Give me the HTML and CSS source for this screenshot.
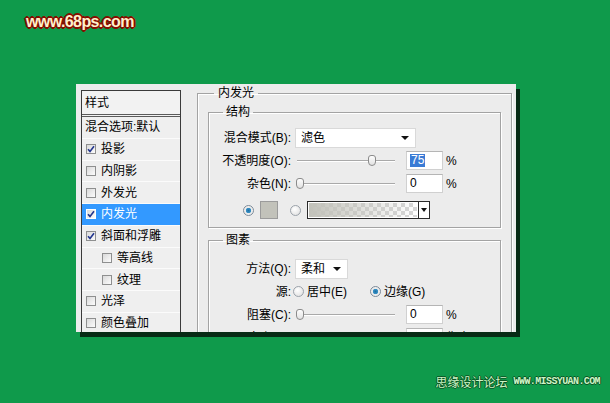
FILE: index.html
```html
<!DOCTYPE html>
<html lang="zh-CN">
<head>
  <meta charset="UTF-8">
  <meta name="viewport" content="width=device-width, initial-scale=1.0">
  <title>图层样式 - 内发光</title>
  <link rel="stylesheet" href="styles.css">
</head>
<body>
  <div class="logo">www.68ps.com</div>

  <div class="dialog">
    <div class="style-list">
      <div class="list-head">样式</div>
      <div class="list-item">混合选项:默认</div>
      <div class="list-item"><span class="check on"><svg viewBox="0 0 8 8"><path d="M1 4.2l2 2.2L7 1.2"/></svg></span>投影</div>
      <div class="list-item"><span class="check"></span>内阴影</div>
      <div class="list-item"><span class="check"></span>外发光</div>
      <div class="list-item selected"><span class="check on"><svg viewBox="0 0 8 8"><path d="M1 4.2l2 2.2L7 1.2"/></svg></span>内发光</div>
      <div class="list-item"><span class="check on"><svg viewBox="0 0 8 8"><path d="M1 4.2l2 2.2L7 1.2"/></svg></span>斜面和浮雕</div>
      <div class="list-item sub"><span class="check"></span>等高线</div>
      <div class="list-item sub"><span class="check"></span>纹理</div>
      <div class="list-item"><span class="check"></span>光泽</div>
      <div class="list-item"><span class="check"></span>颜色叠加</div>
    </div>

    <div class="settings">
      <fieldset class="group outer">
        <legend>内发光</legend>

        <fieldset class="group">
          <legend>结构</legend>
          <div class="row">
            <span class="label">混合模式(B):</span>
            <div class="select mode"><span>滤色</span><i class="arrow"></i></div>
          </div>
          <div class="row">
            <span class="label">不透明度(O):</span>
            <div class="slider"><i class="thumb" style="left: 73%"></i></div>
            <div class="field"><span class="picked">75</span></div>
            <span class="unit">%</span>
          </div>
          <div class="row">
            <span class="label">杂色(N):</span>
            <div class="slider"><i class="thumb" style="left: 0%"></i></div>
            <div class="field">0</div>
            <span class="unit">%</span>
          </div>
          <div class="row fill-row">
            <span class="radio on"></span>
            <span class="swatch"></span>
            <span class="radio"></span>
            <div class="gradient"><span class="gradient-bar"></span><i class="gradient-drop"><i class="arrow"></i></i></div>
          </div>
        </fieldset>

        <fieldset class="group">
          <legend>图素</legend>
          <div class="row">
            <span class="label">方法(Q):</span>
            <div class="select method"><span>柔和</span><i class="arrow"></i></div>
          </div>
          <div class="row">
            <span class="label">源:</span>
            <span class="radio"></span>
            <span class="option">居中(E)</span>
            <span class="radio on second"></span>
            <span class="option">边缘(G)</span>
          </div>
          <div class="row">
            <span class="label">阻塞(C):</span>
            <div class="slider"><i class="thumb" style="left: 0%"></i></div>
            <div class="field">0</div>
            <span class="unit">%</span>
          </div>
          <div class="row">
            <span class="label">大小(S):</span>
            <div class="slider"><i class="thumb" style="left: 16%"></i></div>
            <div class="field">10</div>
            <span class="unit">像素</span>
          </div>
        </fieldset>
      </fieldset>
    </div>
  </div>

  <div class="watermark">
    <span class="wm-cn">思缘设计论坛</span>
    <span class="wm-en">WWW.MISSYUAN.COM</span>
  </div>
</body>
</html>
```

FILE: styles.css
```css
:root {
  --green: #0f9a4b;
  --panel: #ececec;
  --line: #a3a3a3;
  --text: #000;
  --select-blue: #3399ff;
}

* {
  margin: 0;
  padding: 0;
  box-sizing: border-box;
}

body {
  width: 610px;
  height: 403px;
  overflow: hidden;
  background: var(--green);
  font-family: 'Liberation Sans', 'Noto Sans CJK SC', sans-serif;
  font-size: 12px;
  color: var(--text);
}

.logo {
  padding: 13px 0 0 26px;
  height: 31px;
  font-family: 'Liberation Sans', sans-serif;
  font-weight: 700;
  font-size: 16px;
  line-height: 18px;
  letter-spacing: -0.6px;
  color: #fff0cc;
  text-shadow:
    1px 0 #860d00, -1px 0 #860d00, 0 1px #860d00, 0 -1px #860d00,
    1px 1px #860d00, -1px -1px #860d00, 1px -1px #860d00, -1px 1px #860d00,
    2px 0 #860d00, -2px 0 #860d00, 0 2px #860d00, 0 -2px #860d00;
}

/* dialog */

.dialog {
  display: flex;
  align-items: flex-start;
  width: 440px;
  height: 248px;
  margin: 53px 0 0 76px;
  padding: 2px 0 0 5px;
  background: var(--panel);
  box-shadow: 4px 5px 0 #072b15;
  overflow: hidden;
}

.style-list {
  width: 100px;
  margin-top: 4px;
  height: 260px;
  border: 1px solid #3a3a3a;
  border-bottom: none;
  background: #efefef;
}

.list-head {
  height: 26px;
  padding: 4px 0 0 3px;
  line-height: 16px;
  background: #f2f2f2;
  border-bottom: 3px double #5a5a5a;
}

.list-item {
  display: flex;
  align-items: center;
  height: 21.75px;
  padding-left: 3px;
  line-height: 16px;
  border-bottom: 1px solid #fbfbfb;
  white-space: nowrap;
}

.list-item .check {
  margin-left: 1px;
}

.list-item.sub {
  padding-left: 19px;
}

.list-item.selected {
  background: var(--select-blue);
  color: #fff;
}

.check {
  display: inline-flex;
  width: 10px;
  height: 10px;
  margin-right: 5px;
  border: 1px solid #8e8f8f;
  background: linear-gradient(135deg, #d9d9d9, #fcfcfc);
}

.check svg {
  width: 8px;
  height: 8px;
}

.check path {
  fill: none;
  stroke: #23368e;
  stroke-width: 1.6;
}

.selected .check {
  border-color: #fff;
}

/* right side */

.settings {
  margin-left: 16px;
}

.group {
  margin: 0;
  padding: 0;
  min-width: 0;
  border: 1px solid var(--line);
  box-shadow: inset 1px 1px 0 #fff, 1px 1px 0 #fff;
}

.group legend {
  margin-left: 14px;
  padding: 0 3px;
  line-height: 14px;
}

.group + .group {
  margin-top: 4px;
}

.group:first-of-type {
  padding: 7px 0 6px;
}

.group:last-of-type {
  padding: 10px 0 6px;
}

.outer {
  width: 315px;
  height: 280px;
  padding: 0 10px !important;
}

.outer > legend {
  margin-left: 6px;
  padding: 0 4px;
}

.outer > .group {
  margin-top: 5px;
}

.row {
  display: flex;
  align-items: center;
  height: 23px;
  white-space: nowrap;
}

.label {
  width: 84px;
  padding-right: 2px;
  text-align: right;
  line-height: 16px;
}

.select {
  display: flex;
  align-items: center;
  justify-content: space-between;
  height: 20px;
  margin-left: 2px;
  padding: 0 6px 0 5px;
  background: #fff;
  border: 1px solid #d9d9d9;
  line-height: 16px;
}

.select.mode {
  width: 121px;
}

.select.method {
  width: 53px;
}

.arrow {
  display: block;
  width: 0;
  height: 0;
  border-left: 4px solid transparent;
  border-right: 4px solid transparent;
  border-top: 4px solid #111;
}

.slider {
  position: relative;
  width: 98px;
  height: 11px;
  margin-left: 4px;
}

.slider::before {
  content: "";
  position: absolute;
  left: 0;
  right: 0;
  top: 5px;
  height: 1px;
  background: #a9a9a9;
  box-shadow: 0 1px 0 #fff;
}

.thumb {
  position: absolute;
  top: 0;
  width: 8px;
  height: 11px;
  margin-left: -1px;
  border: 1px solid #8b8b8b;
  border-radius: 3px 3px 4px 4px;
  background: linear-gradient(#fdfdfd, #e2e2e2);
}

.field {
  width: 37px;
  height: 19px;
  margin-left: 11px;
  padding-left: 3px;
  background: #fff;
  border: 1px solid #d0d0d0;
  border-top-color: #b5b5b5;
  line-height: 17px;
}

.picked {
  display: inline-block;
  padding: 0 1px;
  line-height: 13px;
  background: #3a7bd5;
  color: #fff;
}

.unit {
  margin-left: 3px;
  line-height: 16px;
}

.radio {
  display: inline-block;
  width: 11px;
  height: 11px;
  border: 1px solid #9ba2aa;
  border-radius: 50%;
  background: radial-gradient(circle at 40% 35%, #fff, #dcdcdc);
}

.radio.on {
  border-color: #7c8a98;
  background: radial-gradient(circle, #1d6fa3 0, #3b93c8 2.5px, #eaeaea 3px, #f6f6f6 100%);
}

.radio.second {
  margin-left: 23px;
}

.option {
  margin-left: 3px;
  line-height: 16px;
}

.fill-row {
  height: 22px;
  margin-top: 4px;
  padding-left: 34px;
}

.swatch {
  width: 18px;
  height: 18px;
  margin-left: 6px;
  background: #c2c2ba;
  border: 1px solid #9b9b9b;
}

.fill-row .radio + .swatch + .radio {
  margin-left: 12px;
}

.gradient {
  display: flex;
  width: 123px;
  height: 18px;
  margin-left: 6px;
  border: 1px solid #2a2a2a;
  background: #fff;
}

.gradient-bar {
  flex: 1;
  margin: 1px;
  background:
    linear-gradient(to right, #c2c2ba, rgba(194, 194, 186, 0)),
    linear-gradient(45deg, #d6d6d6 25%, transparent 25%, transparent 75%, #d6d6d6 75%),
    linear-gradient(45deg, #d6d6d6 25%, #fff 25%, #fff 75%, #d6d6d6 75%);
  background-size: 100% 100%, 8px 8px, 8px 8px;
  background-position: 0 0, 0 0, 4px 4px;
}

.gradient-drop {
  display: flex;
  align-items: center;
  justify-content: center;
  width: 11px;
  border-left: 1px solid #2a2a2a;
}

.gradient-drop .arrow {
  border-left-width: 3px;
  border-right-width: 3px;
}

/* watermark */

.watermark {
  display: flex;
  justify-content: flex-end;
  align-items: center;
  gap: 6px;
  margin-top: 43px;
  padding-right: 10px;
  line-height: 14px;
}

.wm-cn {
  font-family: 'Noto Sans CJK SC', sans-serif;
  font-size: 12px;
  color: #cdf5c6;
  text-shadow:
    1px 0 #0b5424, -1px 0 #0b5424, 0 1px #0b5424, 0 -1px #0b5424;
}

.wm-en {
  font-family: 'Liberation Mono', monospace;
  font-weight: 700;
  font-size: 10px;
  letter-spacing: -0.6px;
  color: #cdf5c6;
  text-shadow:
    1px 0 #0b5424, -1px 0 #0b5424, 0 1px #0b5424, 0 -1px #0b5424;
}
```
